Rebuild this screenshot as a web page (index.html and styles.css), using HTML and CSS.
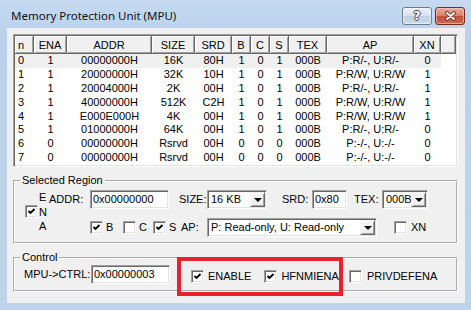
FILE: index.html
```html
<!DOCTYPE html>
<html lang="en">
<head>
    <meta charset="UTF-8">
    <meta name="viewport" content="width=device-width, initial-scale=1.0">
    <title>Memory Protection Unit (MPU)</title>
    <link rel="stylesheet" href="styles.css">
</head>
<body>
<div class="window">
  <div class="titlebar">
    <span class="title">Memory Protection Unit (MPU)</span>
    <button class="cap-btn help"><span>?</span></button>
    <button class="cap-btn close">
      <svg width="11" height="10" viewBox="0 0 11 10">
        <path d="M2 2L9 8M9 2L2 8" stroke="#5a2318" stroke-width="3.6" stroke-linecap="round"/>
        <path d="M2 2L9 8M9 2L2 8" stroke="#fff" stroke-width="2" stroke-linecap="round"/>
      </svg>
    </button>
  </div>

  <div class="client">
    <div class="listview">
      <table>
        <colgroup>
          <col style="width:19px"><col style="width:33px"><col style="width:85px">
          <col style="width:43px"><col style="width:37px"><col style="width:19px">
          <col style="width:19px"><col style="width:19px"><col style="width:38px">
          <col style="width:87px"><col style="width:27px"><col style="width:15px">
        </colgroup>
        <thead>
          <tr>
            <th class="left">n</th><th>ENA</th><th>ADDR</th><th>SIZE</th><th>SRD</th>
            <th>B</th><th>C</th><th>S</th><th>TEX</th><th>AP</th><th>XN</th><th></th>
          </tr>
        </thead>
        <tbody>
          <tr class="sel"><td class="left">0</td><td>1</td><td>00000000H</td><td>16K</td><td>80H</td><td>1</td><td>0</td><td>1</td><td>000B</td><td>P:R/-, U:R/-</td><td>0</td><td class="fill"></td></tr>
          <tr><td class="left">1</td><td>1</td><td>20000000H</td><td>32K</td><td>10H</td><td>1</td><td>0</td><td>1</td><td>000B</td><td>P:R/W, U:R/W</td><td>1</td><td class="fill"></td></tr>
          <tr><td class="left">2</td><td>1</td><td>20004000H</td><td>2K</td><td>00H</td><td>1</td><td>0</td><td>1</td><td>000B</td><td>P:R/-, U:R/-</td><td>1</td><td class="fill"></td></tr>
          <tr><td class="left">3</td><td>1</td><td>40000000H</td><td>512K</td><td>C2H</td><td>1</td><td>0</td><td>1</td><td>000B</td><td>P:R/W, U:R/W</td><td>1</td><td class="fill"></td></tr>
          <tr><td class="left">4</td><td>1</td><td>E000E000H</td><td>4K</td><td>00H</td><td>1</td><td>0</td><td>1</td><td>000B</td><td>P:R/W, U:R/W</td><td>1</td><td class="fill"></td></tr>
          <tr><td class="left">5</td><td>1</td><td>01000000H</td><td>64K</td><td>00H</td><td>1</td><td>0</td><td>1</td><td>000B</td><td>P:R/-, U:R/-</td><td>0</td><td class="fill"></td></tr>
          <tr><td class="left">6</td><td>0</td><td>00000000H</td><td>Rsrvd</td><td>00H</td><td>0</td><td>0</td><td>0</td><td>000B</td><td>P:-/-, U:-/-</td><td>0</td><td class="fill"></td></tr>
          <tr><td class="left">7</td><td>0</td><td>00000000H</td><td>Rsrvd</td><td>00H</td><td>0</td><td>0</td><td>0</td><td>000B</td><td>P:-/-, U:-/-</td><td>0</td><td class="fill"></td></tr>
        </tbody>
      </table>
    </div>

    <fieldset class="group sel-group">
      <legend>Selected Region</legend>
      <div class="sel-body">
        <span class="chk ena-chk"><svg width="9" height="9" viewBox="0 0 9 9"><path d="M1.5 4L3.5 6L7.5 2" fill="none" stroke="#000" stroke-width="1.9"/></svg></span>
        <span class="ena">E<br>N<br>A</span>
        <div class="sel-rows">
          <div class="row">
            <span class="lbl w-addr">ADDR:</span>
            <span class="edit w-addr-in">0x00000000</span>
            <span class="lbl w-size">SIZE:</span>
            <span class="combo w-size-in"><span class="val">16 KB</span><span class="drop"><i></i></span></span>
            <span class="lbl w-srd">SRD:</span>
            <span class="edit w-srd-in">0x80</span>
            <span class="lbl w-tex">TEX:</span>
            <span class="combo w-tex-in"><span class="val">000B</span><span class="drop"><i></i></span></span>
          </div>
          <div class="row row2">
            <span class="chk first"><svg width="9" height="9" viewBox="0 0 9 9"><path d="M1.5 4L3.5 6L7.5 2" fill="none" stroke="#000" stroke-width="1.9"/></svg></span>
            <span class="lbl w-b">B</span>
            <span class="chk"></span>
            <span class="lbl w-c">C</span>
            <span class="chk"><svg width="9" height="9" viewBox="0 0 9 9"><path d="M1.5 4L3.5 6L7.5 2" fill="none" stroke="#000" stroke-width="1.9"/></svg></span>
            <span class="lbl w-s">S</span>
            <span class="lbl w-ap">AP:</span>
            <span class="combo w-ap-in"><span class="val">P: Read-only, U: Read-only</span><span class="drop"><i></i></span></span>
            <span class="chk xn"></span>
            <span class="lbl w-xn">XN</span>
          </div>
        </div>
      </div>
    </fieldset>

    <fieldset class="group ctrl-group">
      <legend>Control</legend>
      <div class="ctrl-body">
        <span class="lbl w-ctrl">MPU-&gt;CTRL:</span>
        <span class="edit w-addr-in ctrl-in">0x00000003</span>
        <div class="highlight">
          <span class="chk"><svg width="9" height="9" viewBox="0 0 9 9"><path d="M1.5 4L3.5 6L7.5 2" fill="none" stroke="#000" stroke-width="1.9"/></svg></span>
          <span class="lbl cb-lbl">ENABLE</span>
          <span class="chk hfn"><svg width="9" height="9" viewBox="0 0 9 9"><path d="M1.5 4L3.5 6L7.5 2" fill="none" stroke="#000" stroke-width="1.9"/></svg></span>
          <span class="lbl cb-lbl">HFNMIENA</span>
        </div>
        <div class="check priv">
          <span class="chk"></span>
          <span class="lbl cb-lbl priv-lbl">PRIVDEFENA</span>
        </div>
      </div>
    </fieldset>
  </div>
</div>
</body>
</html>
```

FILE: styles.css
```css
body {
    margin: 0;
    font-family: "Liberation Sans", Arial, sans-serif;
    font-size: 11px;
    color: #000;
    background: #fff;
}

.window {
    width: 471px;
    height: 310px;
    background: linear-gradient(#c5daf1, #b9d1ea 40px, #bed4ec);
    display: flex;
    flex-direction: column;
}

/* title bar */
.titlebar {
    height: 28px;
    display: flex;
    align-items: flex-start;
    padding: 0 6px 0 11px;
    box-sizing: border-box;
}
.title {
    flex: 1;
    font-family: "Noto Sans", sans-serif;
    font-size: 11.5px;
    line-height: 16px;
    margin-top: 8px;
    color: #111;
}
.cap-btn {
    width: 30px;
    height: 18px;
    margin-top: 7px;
    padding: 0;
    border-radius: 3px;
    display: flex;
    align-items: center;
    justify-content: center;
}
.help {
    margin-right: 3px;
    border: 1px solid #6b7b90;
    background: linear-gradient(#eaf0f7, #d7e1ec 50%, #c3d0df 51%, #cbd8e6);
    box-shadow: inset 0 0 0 1px rgba(255,255,255,0.6);
}
.help span {
    font-family: "DejaVu Sans", sans-serif;
    font-weight: bold;
    font-size: 12px;
    color: #fff;
    text-shadow: 1px 0 #444, -1px 0 #444, 0 1px #444, 0 -1px #444;
}
.close {
    border: 1px solid #76291d;
    background: linear-gradient(#e9ab9c, #d7806c 50%, #c44f38 51%, #cf6a52);
    box-shadow: inset 0 0 0 1px rgba(255,220,210,0.5);
}

/* client area */
.client {
    flex: 1;
    margin: 0 6px 7px 7px;
    background: #f0f0f0;
    padding: 6px 7px 0 6px;
}

/* list view */
.listview {
    height: 133px;
    box-sizing: border-box;
    background: #fff;
    border: 1px solid;
    border-color: #a0a0a0 #fff #fff #a0a0a0;
    box-shadow: inset 1px 1px #696969, inset -1px -1px #e3e3e3;
    padding: 1px;
    overflow: hidden;
}
table {
    width: 441px;
    table-layout: fixed;
    border-collapse: separate;
    border-spacing: 0;
}
thead tr { height: 18px; }
th {
    padding: 0;
    font-weight: normal;
    background: #f0f0f0;
    border-right: 1px solid #696969;
    border-bottom: 1px solid #696969;
    box-shadow: inset 1px 1px #fff, inset -1px -1px #a0a0a0;
    white-space: nowrap;
}
tbody tr { height: 13.8px; }
td {
    padding: 0;
    text-align: center;
    white-space: nowrap;
    line-height: 13px;
}
th.left, td.left { text-align: left; padding-left: 3px; }
tr.sel td { background: #f0f0f0; }
tr.sel td.fill { background: #fff; }

/* group boxes */
.group {
    margin: 7px 0 0 0;
    padding: 0;
    min-width: 0;
    border: 2px groove #fff;
}
.group legend {
    margin-left: 5px;
    padding: 0 2px;
    font-size: 11px;
    line-height: 13px;
}

.sel-body {
    height: 55px;
    box-sizing: border-box;
    padding: 3px 0 0 10px;
    display: flex;
    align-items: flex-start;
}
.ena-chk { margin-top: 15px; }
.ena {
    width: 10px;
    margin-left: 1px;
    line-height: 14.5px;
}
.sel-rows { display: flex; flex-direction: column; }
.row {
    height: 19px;
    display: flex;
    align-items: center;
}
.row2 { margin-top: 9px; }

.lbl { line-height: 13px; white-space: nowrap; }
.w-addr { width: 41px; }
.w-size { width: 28px; margin-left: 10px; }
.w-srd { width: 30px; margin-left: 15px; }
.w-tex { width: 28px; margin-left: 7px; }
.w-b { width: 17px; margin-left: 3px; }
.w-c { width: 14px; margin-left: 3px; }
.w-s { width: 12px; margin-left: 3px; }
.w-ap { width: 26px; }
.w-xn { margin-left: 4px; }
.w-ctrl { width: 67px; line-height: 19px; margin-top: 1px; }

/* sunken edit / combo / checkbox */
.edit, .combo, .chk {
    box-sizing: border-box;
    background: #fff;
    border: 1px solid;
    border-color: #a0a0a0 #fff #fff #a0a0a0;
    box-shadow: inset 1px 1px #696969, inset -1px -1px #e3e3e3;
}
.edit {
    height: 19px;
    padding: 0 2px;
    line-height: 17px;
}
.w-addr-in { width: 79px; }
.w-srd-in { width: 35px; }
.combo {
    height: 19px;
    display: flex;
    padding: 1px;
}
.combo .val {
    flex: 1;
    padding-left: 2px;
    line-height: 15px;
    overflow: hidden;
    white-space: nowrap;
}
.drop {
    width: 15px;
    height: 15px;
    box-sizing: border-box;
    background: #f0f0f0;
    border: 1px solid;
    border-color: #f0f0f0 #696969 #696969 #f0f0f0;
    box-shadow: inset 1px 1px #fff, inset -1px -1px #a0a0a0;
    display: flex;
    align-items: center;
    justify-content: center;
}
.drop i {
    width: 0;
    height: 0;
    border-style: solid;
    border-width: 4px 4px 0;
    border-color: #000 transparent transparent;
    margin-top: 1px;
}
.w-size-in { width: 60px; }
.w-tex-in { width: 46px; }
.w-ap-in { width: 170px; }

.chk {
    width: 13px;
    height: 13px;
    flex: none;
    display: flex;
    align-items: center;
    justify-content: center;
}
.chk svg { display: block; }
.row2 .first { margin-left: 41px; }
.xn { margin-left: 17px; }

/* control group */
.ctrl-body {
    height: 26px;
    padding-left: 9px;
    display: flex;
    align-items: flex-start;
}
.ctrl-in { margin-top: 1px; }
.highlight {
    width: 166px;
    height: 39px;
    box-sizing: border-box;
    margin: -7px 0 0 7px;
    border: 4px solid #e8212b;
    padding-left: 10px;
    display: flex;
    align-items: center;
}
.cb-lbl { margin-left: 4px; }
.hfn { margin-left: 13px; }
.check {
    display: flex;
    align-items: center;
}
.priv { margin: 6px 0 0 6px; }
.priv-lbl { margin-left: 5px; }
```
